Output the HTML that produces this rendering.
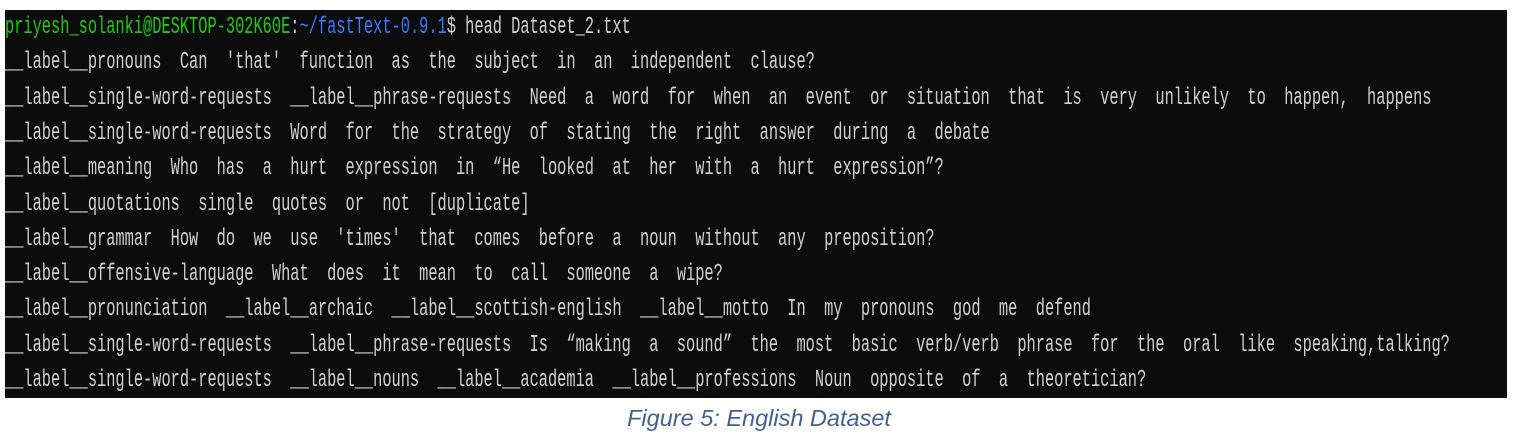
<!DOCTYPE html>
<html><head><meta charset="utf-8"><style>
html,body{margin:0;padding:0;background:#fff;width:1518px;height:445px;overflow:hidden;position:relative}
#term{position:absolute;left:5px;top:10px;width:1502px;height:388px;background:#0c0c0c}
.l{position:absolute;left:5px;white-space:pre;font-family:"Liberation Mono",monospace;font-size:24px;line-height:30px;color:#d0d0d0;transform:scaleX(0.639);transform-origin:0 0;margin-top:2px}
.g{color:#20c814}.b{color:#3b78ff}
#cap{position:absolute;left:0;width:1518px;top:405px;text-align:center;font-family:"Liberation Sans",sans-serif;font-style:italic;font-size:23.5px;color:#44608e}
</style></head><body>
<div id="term"></div>
<div class="l" style="top:11px"><span class="g">priyesh_solanki@DESKTOP-302K60E</span>:<span class="b">~/fastText-0.9.1</span>$ head Dataset_2.txt</div>
<div class="l" style="top:46px">__label__pronouns  Can  'that'  function  as  the  subject  in  an  independent  clause?</div>
<div class="l" style="top:82px">__label__single-word-requests  __label__phrase-requests  Need  a  word  for  when  an  event  or  situation  that  is  very  unlikely  to  happen,  happens</div>
<div class="l" style="top:117px">__label__single-word-requests  Word  for  the  strategy  of  stating  the  right  answer  during  a  debate</div>
<div class="l" style="top:152px">__label__meaning  Who  has  a  hurt  expression  in  “He  looked  at  her  with  a  hurt  expression”?</div>
<div class="l" style="top:188px">__label__quotations  single  quotes  or  not  [duplicate]</div>
<div class="l" style="top:223px">__label__grammar  How  do  we  use  'times'  that  comes  before  a  noun  without  any  preposition?</div>
<div class="l" style="top:258px">__label__offensive-language  What  does  it  mean  to  call  someone  a  wipe?</div>
<div class="l" style="top:293px">__label__pronunciation  __label__archaic  __label__scottish-english  __label__motto  In  my  pronouns  god  me  defend</div>
<div class="l" style="top:329px">__label__single-word-requests  __label__phrase-requests  Is  “making  a  sound”  the  most  basic  verb/verb  phrase  for  the  oral  like  speaking,talking?</div>
<div class="l" style="top:364px">__label__single-word-requests  __label__nouns  __label__academia  __label__professions  Noun  opposite  of  a  theoretician?</div>
<div id="cap">Figure 5: English Dataset</div>
</body></html>
